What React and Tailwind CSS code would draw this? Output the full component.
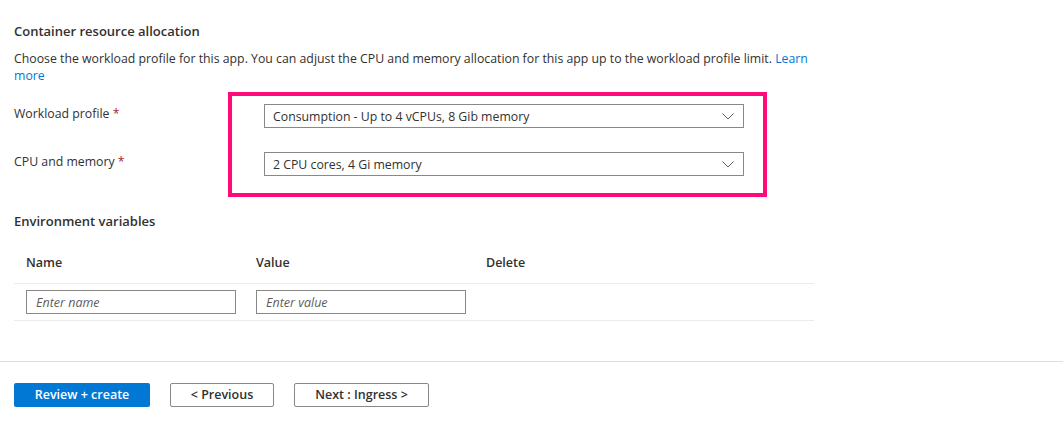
const font = { fontFamily: '"Open Sans", "Noto Sans", sans-serif' };

function Chevron() {
  return (
    <svg width="12" height="7" viewBox="0 0 12 7" className="shrink-0">
      <polyline points="0.5,0.5 6,6 11.5,0.5" fill="none" stroke="#605e5c" strokeWidth="1" />
    </svg>
  );
}

function Dropdown({ value }) {
  return (
    <div className="flex h-[24px] w-[480px] items-center justify-between border border-[#8a8886] pl-[8px] pr-[9px]">
      <span className="leading-[17px]">{value}</span>
      <Chevron />
    </div>
  );
}

function Required({ children }) {
  return (
    <div className="leading-[17px]">
      {children} <span className="text-[#a4262c]">*</span>
    </div>
  );
}

function TextInput({ placeholder }) {
  return (
    <div className="flex h-[24px] w-[210px] items-center border border-[#8a8886] px-[9px] pt-[2px]">
      <span className="text-[12.5px] italic text-[#605e5c]">{placeholder}</span>
    </div>
  );
}

function Button({ children, primary, width }) {
  const base = 'flex h-[24px] items-center justify-center rounded-[2px] pt-[1px] text-[12.5px] font-semibold';
  const look = primary
    ? 'bg-[#0078d4] text-white'
    : 'border border-[#8a8886] bg-white text-[#323130]';
  return <div className={`${base} ${look} ${width}`}>{children}</div>;
}

export default function App() {
  return (
    <div style={font} className="h-[426px] w-[1063px] overflow-hidden bg-white text-[12.3px] text-[#323130]">
      <div className="px-[14px] pt-[22px]">
        <h2 className="text-[13px] font-semibold leading-[18px]">Container resource allocation</h2>
        <p className="mt-[10px] w-[800px] leading-[17px]">
          Choose the workload profile for this app. You can adjust the CPU and memory allocation for this app up to the workload profile limit.{' '}
          <span className="text-[#0078d4]">Learn more</span>
        </p>

        <div className="mt-[8px] flex">
          <div className="flex w-[214px] flex-col gap-[31px] pt-[13px]">
            <Required>Workload profile</Required>
            <Required>CPU and memory</Required>
          </div>
          <div className="flex h-[105px] w-[539px] flex-col gap-[24px] border-4 border-[#ff0a78] pl-[32px] pt-[8px]">
            <Dropdown value="Consumption - Up to 4 vCPUs, 8 Gib memory" />
            <Dropdown value="2 CPU cores, 4 Gi memory" />
          </div>
        </div>

        <h3 className="mt-[15px] text-[13px] font-semibold leading-[18px]">Environment variables</h3>

        <div className="w-[800px]">
          <div className="grid grid-cols-[230px_230px_1fr] border-b border-[#edebe9] pb-[12px] pl-[12px] pt-[24px] text-[12.5px] font-semibold leading-[17px]">
            <div>Name</div>
            <div>Value</div>
            <div>Delete</div>
          </div>
          <div className="grid grid-cols-[230px_230px_1fr] border-b border-[#edebe9] py-[6px] pl-[12px]">
            <TextInput placeholder="Enter name" />
            <TextInput placeholder="Enter value" />
            <div />
          </div>
        </div>
      </div>

      <div className="mt-[40px] border-t border-[#e1dfdd] px-[14px] pt-[21px]">
        <div className="flex gap-[20px]">
          <Button primary width="w-[136px]">Review + create</Button>
          <Button width="w-[104px]">&lt; Previous</Button>
          <Button width="w-[135px]">Next : Ingress &gt;</Button>
        </div>
      </div>
    </div>
  );
}
